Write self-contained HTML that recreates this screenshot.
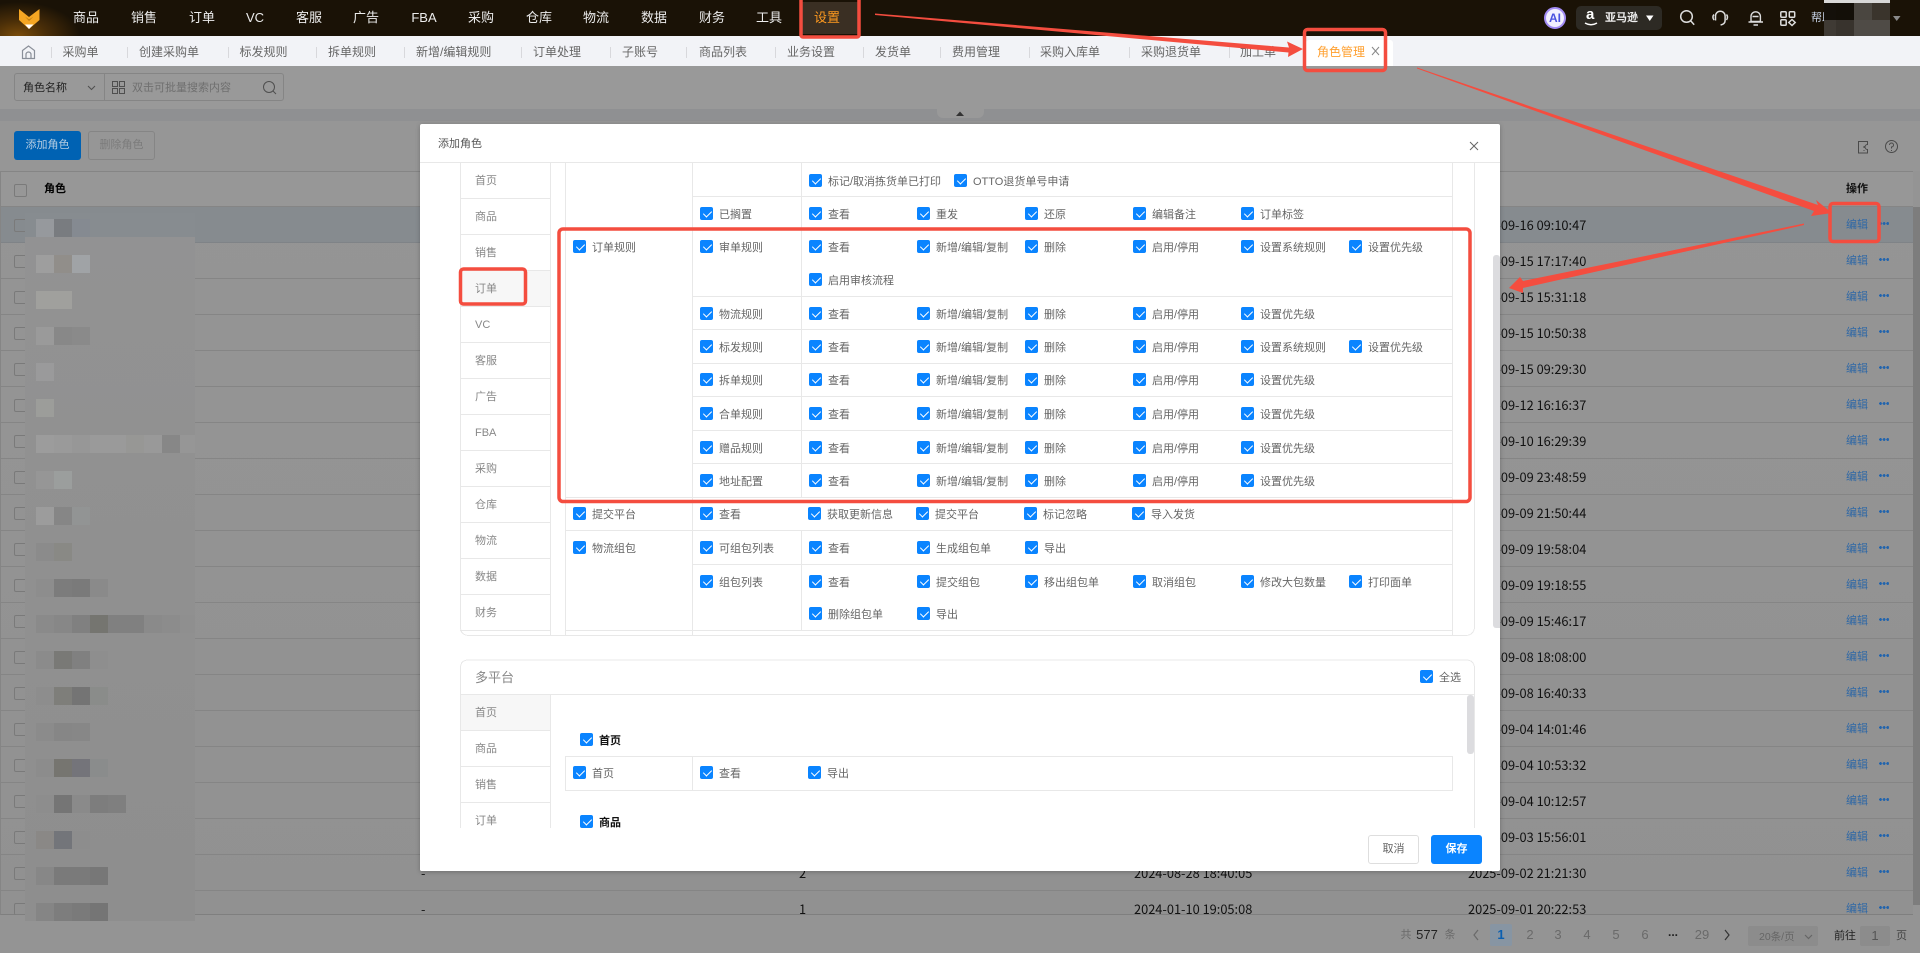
<!DOCTYPE html>
<html lang="zh"><head><meta charset="utf-8"><title>角色管理</title>
<style>
*{box-sizing:border-box;margin:0;padding:0}
html,body{width:1920px;height:953px;overflow:hidden;background:#949494}
body{position:relative;font:11px/16px "Liberation Sans","Noto Sans CJK SC",sans-serif;color:#666}
div,span,svg{position:absolute}
svg{left:0;top:0}
.n{top:10px;color:#ececec;font-size:13px;transform:translateX(-50%);white-space:nowrap}
.t{top:44px;white-space:nowrap;color:#666;font-size:12px}
.s{top:47px;width:1px;height:11px;background:#d8d8dc}
.d{left:1468px;color:#111;font-size:12.8px;white-space:nowrap;font-family:"Noto Sans CJK SC",sans-serif}
.e{left:1846px;color:#2f68a6;white-space:nowrap}
.o{left:1879px;width:10px;height:3px;background:radial-gradient(circle at 1.5px 1.5px,#2264ad 1.4px,transparent 1.5px) 0 0/3.6px 3px repeat-x}
.cb{left:14px;width:13px;height:13px;border:1px solid #7a7a7a;border-radius:2px}
.m{height:18px}
.r{left:0;width:1080px;height:16px}
.k{top:0;height:16px;padding-left:19px;white-space:nowrap;color:#666}
.k:before{content:"";position:absolute;left:0;top:0;width:13px;height:13px;background:#0a84ff;border-radius:2px}
.k:after{content:"";position:absolute;left:4.5px;top:2px;width:4px;height:7px;border:solid #fff;border-width:0 1.2px 1.2px 0;transform:rotate(45deg)}
.a{left:153px}.b{left:280px}.c{left:389px}.dd{left:497px}.ee{left:605px}.f{left:713px}.g{left:821px}.h{left:929px}
.l{color:#888;left:55px}
.p{top:927px;color:#6a6a6a;white-space:nowrap;transform:translateX(-50%)}
</style></head>
<body>
<!-- top bar -->
<div style="left:0;top:0;width:1920px;height:36px;background:#1a1206"></div>
<div style="left:0;top:0;width:90px;height:36px;background:radial-gradient(ellipse 62px 34px at 18px 36px,#7a4c0a 0,#4a2e08 45%,#1a1206 100%)"></div>
<svg width="60" height="36"><path d="M19 9L29 17L39.500 9V20L29 29L19 20z" fill="#f5a623"/><path d="M25 24.500H33.500L29 29z" fill="#fff"/><path d="M25 16.500L29 19.500L33.500 16.500L29 21z" fill="#b87a12"/></svg>
<div class="n" style="left:86px">商品</div><div class="n" style="left:144px">销售</div><div class="n" style="left:202px">订单</div><div class="n" style="left:255px">VC</div><div class="n" style="left:309px">客服</div><div class="n" style="left:366px">广告</div><div class="n" style="left:424px">FBA</div><div class="n" style="left:481px">采购</div><div class="n" style="left:539px">仓库</div><div class="n" style="left:596px">物流</div><div class="n" style="left:654px">数据</div><div class="n" style="left:712px">财务</div><div class="n" style="left:769px">工具</div>
<div style="left:802px;top:2px;width:56px;height:32px;background:#3a2f23"></div>
<div class="n" style="left:827px;color:#ff9a1f">设置</div>
<div style="left:1544px;top:7px;width:22px;height:22px;border-radius:50%;background:#f2f0ff;border:2px solid #a28cf5"></div>
<div style="left:1549px;top:10px;color:#4a52e0;font-weight:bold;font-size:12px">AI</div>
<div style="left:1576px;top:6px;width:86px;height:24px;border-radius:5px;background:#2d2a24"></div>
<div style="left:1586px;top:7px;color:#fff;font-weight:bold;font-size:15px;font-family:'Liberation Sans',sans-serif">a</div>
<div style="left:1605px;top:10px;color:#eee;font-size:11px;font-weight:bold">亚马逊</div>
<svg width="1920" height="36" style="fill:none;stroke:#ddd;stroke-width:1.5">
<path d="M1585 23q6 3.500 12 0" stroke="#fff"/>
<path d="M1646 15.500h7.500l-3.750 5.500z" fill="#fff" stroke="none"/>
<circle cx="1686.500" cy="16.500" r="5.800"/><path d="M1690.700 20.800l3.500 4"/>
<path d="M1715.500 20.500v-4.500a4.800 4.800 0 0 1 9.600 0v4.500q0 3.500-4.500 4.500M1714 14.500q-2.200 2.500 0 5.500M1726.500 14.500q2 2.500 0 5.500"/>
<path d="M1751 21.500v-5a4.700 4.700 0 0 1 9.400 0v5zM1748.500 22h14.500M1752.500 16.500h6M1753.500 25h4.500" stroke-width="1.400"/>
<rect x="1780.800" y="11.800" width="5.400" height="5.400" rx="1"/><rect x="1789.300" y="11.800" width="5.400" height="5.400" rx="1"/><rect x="1780.800" y="19.800" width="5.400" height="5.400" rx="1"/><path d="M1792 19.500l3.200 3-3.200 3-3.200-3z"/>
<path d="M1893 16h7.500l-3.750 5z" fill="#8a8a8a" stroke="none"/>
</svg>
<div style="left:1811px;top:10px;color:#c8d4e8;font-size:11px;width:13px;overflow:hidden;white-space:nowrap">帮助</div>
<div style="left:1824px;top:0;width:12px;height:36px;background:linear-gradient(#d8d8d8 0 3px,#14100a 3px 20px,#3f3a34 20px)"></div>
<div style="left:1836px;top:0;width:18px;height:36px;background:linear-gradient(#d8d8d8 0 3px,#130f08 3px 20px,#38332d 20px)"></div>
<div style="left:1854px;top:0;width:18px;height:36px;background:linear-gradient(#d8d8d8 0 3px,#4a4640 3px 20px,#4f4b46 20px)"></div>
<div style="left:1872px;top:0;width:18px;height:36px;background:linear-gradient(#d8d8d8 0 3px,#3a342c 3px 20px,#4f4b46 20px)"></div>

<!-- tab bar -->
<div style="left:0;top:36px;width:1920px;height:30px;background:#f2f3f7"></div>
<svg width="60" height="66" style="fill:none;stroke:#8a8f99;stroke-width:1.200"><path d="M22.500 50.500L28.500 46L34.500 50.500V58.500H22.500zM26 58.500V54.500a2.500 2.500 0 0 1 5 0V58.500"/></svg>
<div class="s" style="left:51px"></div><div class="t" style="left:62.500px">采购单</div>
<div class="s" style="left:127px"></div><div class="t" style="left:139px">创建采购单</div>
<div class="s" style="left:228px"></div><div class="t" style="left:239.500px">标发规则</div>
<div class="s" style="left:316px"></div><div class="t" style="left:328px">拆单规则</div>
<div class="s" style="left:404px"></div><div class="t" style="left:416px">新增/编辑规则</div>
<div class="s" style="left:521px"></div><div class="t" style="left:533px">订单处理</div>
<div class="s" style="left:610px"></div><div class="t" style="left:622px">子账号</div>
<div class="s" style="left:686px"></div><div class="t" style="left:699px">商品列表</div>
<div class="s" style="left:775px"></div><div class="t" style="left:787px">业务设置</div>
<div class="s" style="left:863px"></div><div class="t" style="left:875px">发货单</div>
<div class="s" style="left:940px"></div><div class="t" style="left:952px">费用管理</div>
<div class="s" style="left:1029px"></div><div class="t" style="left:1040px">采购入库单</div>
<div class="s" style="left:1129px"></div><div class="t" style="left:1141px">采购退货单</div>
<div class="s" style="left:1229px"></div><div class="t" style="left:1240px">加工单</div>
<div style="left:1306px;top:40px;width:87px;height:26px;background:#fff;border-radius:3px 3px 0 0"></div>
<div class="t" style="left:1317px;color:#ff9f2e">角色管理</div>
<svg width="1400" height="66" style="fill:none;stroke:#888;stroke-width:1"><path d="M1372 47l7 8M1379 47l-7 8"/></svg>

<!-- page under overlay -->
<div style="left:0;top:66px;width:1920px;height:43px;background:#999"></div>
<div style="left:0;top:109px;width:1920px;height:12px;background:#8f9092"></div>
<div style="left:937px;top:109px;width:47px;height:9px;background:#999;border-radius:0 0 6px 6px"></div>
<svg width="1000" height="120"><path d="M956 116l4-4.500 4 4.500z" fill="#333"/></svg>
<div style="left:0;top:121px;width:1920px;height:50px;background:#969696"></div>
<div style="left:14px;top:73px;width:270px;height:28px;border:1px solid #858585;border-radius:3px"></div>
<div style="left:104px;top:73px;width:1px;height:28px;background:#858585"></div>
<div style="left:23px;top:80px;color:#222;white-space:nowrap">角色名称</div>
<div style="left:132px;top:80px;color:#6f6f6f;white-space:nowrap">双击可批量搜索内容</div>
<svg width="300" height="110" style="fill:none;stroke:#4f4f4f;stroke-width:1"><path d="M88 86l3.500 3.500 3.500-3.500" /><rect x="112.500" y="81.500" width="5" height="5"/><rect x="119.500" y="81.500" width="5" height="5"/><rect x="112.500" y="88.500" width="5" height="5"/><rect x="119.500" y="88.500" width="5" height="5"/><circle cx="269" cy="87" r="5.500"/><path d="M273 91l3 3"/></svg>
<div style="left:14px;top:131px;width:67px;height:29px;background:#0062b3;border-radius:3px;color:#b5cde2;text-align:center;line-height:28px">添加角色</div>
<div style="left:88px;top:131px;width:67px;height:29px;border:1px solid #858585;border-radius:3px;color:#7b7b7b;text-align:center;line-height:27px">删除角色</div>
<svg width="1920" height="170" style="fill:none;stroke:#4a4a4a;stroke-width:1"><path d="M1858.500 141.500h9v3a2 2 0 0 0 0 5v3.500h-9z M1864 146v2M1864 150v1"/><circle cx="1891.500" cy="146.500" r="6"/><path d="M1889.500 145a2 2 0 1 1 2 2v1.500M1891.500 150v1"/></svg>

<!-- table -->
<div style="left:0;top:171px;width:1913px;height:744px;border-left:1px solid #858585;border-top:1px solid #858585;border-bottom:1px solid #7f7f7f;background:linear-gradient(#959595,#919191)"></div>
<div style="left:1px;top:172px;width:1912px;height:35px;background:#979797;border-bottom:1px solid #858585"></div>
<div style="left:1px;top:207px;width:1912px;height:707px;background:repeating-linear-gradient(to bottom,transparent 0 35px,#858585 35px 36px)"></div>
<div style="left:1px;top:207px;width:1912px;height:36px;background:#868b8f;border-bottom:1px solid #7f8387"></div>
<div style="left:1913px;top:207px;width:7px;height:698px;background:#7d7d7d"></div>
<div style="left:44px;top:181px;color:#000;font-weight:bold">角色</div>
<div style="left:1846px;top:181px;color:#111;font-weight:bold">操作</div>
<div class="cb" style="top:184px"></div><div class="cb" style="top:219px"></div><div class="cb" style="top:255px"></div><div class="cb" style="top:291px"></div><div class="cb" style="top:327px"></div><div class="cb" style="top:363px"></div><div class="cb" style="top:399px"></div><div class="cb" style="top:435px"></div><div class="cb" style="top:471px"></div><div class="cb" style="top:507px"></div><div class="cb" style="top:543px"></div><div class="cb" style="top:579px"></div><div class="cb" style="top:615px"></div><div class="cb" style="top:651px"></div><div class="cb" style="top:687px"></div><div class="cb" style="top:723px"></div><div class="cb" style="top:759px"></div><div class="cb" style="top:795px"></div><div class="cb" style="top:831px"></div><div class="cb" style="top:867px"></div><div class="cb" style="top:903px;height:12px;border-bottom:0"></div>
<div style="left:25px;top:237px;width:170px;height:684px;background:linear-gradient(#929293 0,#919191 30%,#8e8e8e 100%)"></div>
<div style="left:25px;top:213px;width:170px;height:24px;background:#878c90"></div>
<!-- mosaic -->
<div class="m" style="left:36px;top:219px;width:54px;background:linear-gradient(90deg,#96999d 0 18px,#797c80 18px 36px,#858a91 36px)"></div>
<div class="m" style="left:36px;top:255px;width:54px;background:linear-gradient(90deg,#9e9e9e 0 18px,#918e8a 18px 36px,#a0a3a6 36px)"></div>
<div class="m" style="left:36px;top:291px;width:36px;background:#a0a09d"></div>
<div class="m" style="left:36px;top:327px;width:54px;background:linear-gradient(90deg,#9a9a9a 0 18px,#888 18px 36px,#8a8a8a 36px)"></div>
<div class="m" style="left:36px;top:363px;width:18px;background:#9a9a9b"></div>
<div class="m" style="left:36px;top:399px;width:18px;background:#9c9d9a"></div>
<div class="m" style="left:36px;top:435px;width:159px;background:linear-gradient(90deg,#9c9c9c 0 18px,#9a9a9a 18px 36px,#979797 36px 54px,#9a9a9a 54px 90px,#979795 90px 108px,#999 108px 126px,#878787 126px 144px,#969696 144px)"></div>
<div class="m" style="left:36px;top:471px;width:36px;background:linear-gradient(90deg,#969696 0 18px,#9b9e9d 18px)"></div>
<div class="m" style="left:36px;top:507px;width:54px;background:linear-gradient(90deg,#9c9c9c 0 18px,#868686 18px 36px,#929494 36px)"></div>
<div class="m" style="left:36px;top:543px;width:36px;background:linear-gradient(90deg,#8b8b8b 0 18px,#898985 18px)"></div>
<div class="m" style="left:36px;top:579px;width:72px;background:linear-gradient(90deg,#8d8d8d 0 18px,#7c7c7c 18px 36px,#7a7a7a 36px 54px,#8a8a8a 54px)"></div>
<div class="m" style="left:36px;top:615px;width:159px;background:linear-gradient(90deg,#8a8a8a 0 18px,#878787 18px 36px,#808080 36px 54px,#757570 54px 72px,#808080 72px 108px,#8a8a8a 108px 126px,#8c8c8c 126px 144px,#8f8f8f 144px)"></div>
<div class="m" style="left:36px;top:651px;width:72px;background:linear-gradient(90deg,#8b8b8b 0 18px,#797976 18px 36px,#808080 36px 54px,#8e8e8e 54px)"></div>
<div class="m" style="left:36px;top:687px;width:72px;background:linear-gradient(90deg,#8d8d8d 0 18px,#7e7e7a 18px 36px,#747474 36px 54px,#8a8c8a 54px)"></div>
<div class="m" style="left:36px;top:723px;width:54px;background:linear-gradient(90deg,#8b8b8b 0 18px,#868686 18px 36px,#878787 36px)"></div>
<div class="m" style="left:36px;top:759px;width:72px;background:linear-gradient(90deg,#8c8c8c 0 18px,#767570 18px 36px,#74747a 36px 54px,#8a8c8c 54px)"></div>
<div class="m" style="left:36px;top:795px;width:90px;background:linear-gradient(90deg,#8d8d8d 0 18px,#757575 18px 36px,#8a8a8a 36px 54px,#7d7d7d 54px 72px,#7f7f7f 72px)"></div>
<div class="m" style="left:36px;top:831px;width:54px;background:linear-gradient(90deg,#8a8886 0 18px,#73757a 18px 36px,#8d8d8d 36px)"></div>
<div class="m" style="left:36px;top:867px;width:72px;background:linear-gradient(90deg,#878787 0 18px,#7a7a7a 18px 54px,#777 54px)"></div>
<div class="m" style="left:36px;top:903px;width:72px;background:linear-gradient(90deg,#858585 0 18px,#7d7d7d 18px 36px,#7a7a7a 36px 54px,#757575 54px)"></div>

<div class="d" style="top:217px">2025-09-16 09:10:47</div><div class="d" style="top:253px">2025-09-15 17:17:40</div><div class="d" style="top:289px">2025-09-15 15:31:18</div><div class="d" style="top:325px">2025-09-15 10:50:38</div><div class="d" style="top:361px">2025-09-15 09:29:30</div><div class="d" style="top:397px">2025-09-12 16:16:37</div><div class="d" style="top:433px">2025-09-10 16:29:39</div><div class="d" style="top:469px">2025-09-09 23:48:59</div><div class="d" style="top:505px">2025-09-09 21:50:44</div><div class="d" style="top:541px">2025-09-09 19:58:04</div><div class="d" style="top:577px">2025-09-09 19:18:55</div><div class="d" style="top:613px">2025-09-09 15:46:17</div><div class="d" style="top:649px">2025-09-08 18:08:00</div><div class="d" style="top:685px">2025-09-08 16:40:33</div><div class="d" style="top:721px">2025-09-04 14:01:46</div><div class="d" style="top:757px">2025-09-04 10:53:32</div><div class="d" style="top:793px">2025-09-04 10:12:57</div><div class="d" style="top:829px">2025-09-03 15:56:01</div><div class="d" style="top:865px">2025-09-02 21:21:30</div><div class="d" style="top:901px">2025-09-01 20:22:53</div>
<div class="d" style="left:1134px;top:865px">2024-08-28 18:40:05</div><div class="d" style="left:1134px;top:901px">2024-01-10 19:05:08</div>
<div class="d" style="left:421px;top:865px">-</div><div class="d" style="left:421px;top:901px">-</div>
<div class="d" style="left:799px;top:865px">2</div><div class="d" style="left:799px;top:901px">1</div>

<div class="e" style="top:217px">编辑</div><div class="e" style="top:253px">编辑</div><div class="e" style="top:289px">编辑</div><div class="e" style="top:325px">编辑</div><div class="e" style="top:361px">编辑</div><div class="e" style="top:397px">编辑</div><div class="e" style="top:433px">编辑</div><div class="e" style="top:469px">编辑</div><div class="e" style="top:505px">编辑</div><div class="e" style="top:541px">编辑</div><div class="e" style="top:577px">编辑</div><div class="e" style="top:613px">编辑</div><div class="e" style="top:649px">编辑</div><div class="e" style="top:685px">编辑</div><div class="e" style="top:721px">编辑</div><div class="e" style="top:757px">编辑</div><div class="e" style="top:793px">编辑</div><div class="e" style="top:829px">编辑</div><div class="e" style="top:865px">编辑</div><div class="e" style="top:901px">编辑</div>
<div class="o" style="top:222px"></div><div class="o" style="top:258px"></div><div class="o" style="top:294px"></div><div class="o" style="top:330px"></div><div class="o" style="top:366px"></div><div class="o" style="top:402px"></div><div class="o" style="top:438px"></div><div class="o" style="top:474px"></div><div class="o" style="top:510px"></div><div class="o" style="top:546px"></div><div class="o" style="top:582px"></div><div class="o" style="top:618px"></div><div class="o" style="top:654px"></div><div class="o" style="top:690px"></div><div class="o" style="top:726px"></div><div class="o" style="top:762px"></div><div class="o" style="top:798px"></div><div class="o" style="top:834px"></div><div class="o" style="top:870px"></div><div class="o" style="top:906px"></div>

<!-- pagination -->
<div class="p" style="left:1406px">共</div>
<div class="p" style="left:1427px;color:#222;font-size:13px">577</div>
<div class="p" style="left:1450px">条</div>
<div style="left:1490px;top:924px;width:22px;height:22px;background:#8795a3;border-radius:2px;color:#0a5fb0;font-weight:bold;text-align:center;line-height:22px;font-size:13px">1</div>
<div class="p" style="left:1530px;font-size:13px">2</div><div class="p" style="left:1558px;font-size:13px">3</div><div class="p" style="left:1587px;font-size:13px">4</div><div class="p" style="left:1616px;font-size:13px">5</div><div class="p" style="left:1645px;font-size:13px">6</div><div class="p" style="left:1673px;font-weight:bold;color:#222;top:924px;font-size:12px">...</div><div class="p" style="left:1702px;font-size:13px">29</div>
<svg width="1920" height="953" style="fill:none;stroke:#6a6a6a;stroke-width:1.2"><path d="M1478 930l-4 5 4 5"/><path d="M1725 930l4 5-4 5" stroke="#333"/></svg>
<div style="left:1748px;top:926px;width:70px;height:20px;background:#8c8c8c;border-radius:2px"></div>
<div style="left:1759px;top:929px;color:#666;font-size:10.500px;white-space:nowrap">20条/页</div>
<svg width="1920" height="953" style="fill:none;stroke:#666;stroke-width:1.200"><path d="M1805 935l3.500 3.500 3.500-3.500"/></svg>
<div style="left:1834px;top:928px;color:#222;white-space:nowrap">前往</div>
<div style="left:1860px;top:926px;width:30px;height:20px;background:#8c8c8c;border-radius:2px;color:#555;text-align:center;line-height:20px;font-size:13px">1</div>
<div style="left:1896px;top:928px;color:#444">页</div>

<!-- modal -->
<div style="left:420px;top:124px;width:1080px;height:747px;background:#fff;border-radius:2px;box-shadow:0 1px 5px rgba(0,0,0,.25);overflow:hidden">
  <svg width="1080" height="747" style="left:0;top:0;fill:none;stroke:#e8e8e8;stroke-width:1;shape-rendering:crispEdges">
    <path transform="translate(-420 -124)" d="
    M420 162.500H1500
    M460.500 162V627q0 8 8 8.500H1466q8-.5 8.500-8.500V162
    M550.500 162V635 M565.500 162V635 M692.500 162V635 M801.500 162V497 M801.500 530V630 M1452.500 162V635
    M460 198.500H550 M460 234.500H550 M460 270.500H550 M460 306.500H550 M460 342.500H550 M460 378.500H550 M460 414.500H550 M460 450.500H550 M460 486.500H550 M460 522.500H550 M460 558.500H550 M460 594.500H550 M460 630.500H550
    M692 196.500H1452 M692 229.500H1452 M692 296.500H1452 M692 329.500H1452 M692 363.500H1452 M692 396.500H1452 M692 430.500H1452 M692 463.500H1452
    M565 497.500H1452 M565 530.500H1452 M692 564.500H1452 M565 630.500H1452
    M460.500 828V668q0-8 8-8H1466q8 0 8.500 8V828
    M460 694.500H1474 M550.500 694V828 M460 730.500H550 M460 766.500H550 M460 802.500H550
    M565.500 756.500H1452.500V790.500H565.500Z M692.500 756V790"/>
  </svg>
  <div style="left:41px;top:147px;width:89px;height:35px;background:#f7f7f7"></div>
  <div style="left:41px;top:571px;width:89px;height:35px;background:#f7f7f7"></div>
  <div style="left:18px;top:12px;color:#555">添加角色</div>
  <svg width="1080" height="60" style="fill:none;stroke:#666;stroke-width:1"><path d="M1050 18l8 8M1058 18l-8 8"/></svg>

  <div class="l" style="top:49px">首页</div><div class="l" style="top:85px">商品</div><div class="l" style="top:121px">销售</div><div class="l" style="top:157px">订单</div><div class="l" style="top:193px">VC</div><div class="l" style="top:229px">客服</div><div class="l" style="top:265px">广告</div><div class="l" style="top:301px">FBA</div><div class="l" style="top:337px">采购</div><div class="l" style="top:373px">仓库</div><div class="l" style="top:409px">物流</div><div class="l" style="top:445px">数据</div><div class="l" style="top:481px">财务</div>

  <div class="r" style="top:50px"><span class="k c">标记/取消拣货单已打印</span><span class="k" style="left:534px">OTTO退货单号申请</span></div>
  <div class="r" style="top:83px"><span class="k b">已搁置</span><span class="k c">查看</span><span class="k dd">重发</span><span class="k ee">还原</span><span class="k f">编辑备注</span><span class="k g">订单标签</span></div>
  <div class="r" style="top:116px"><span class="k a">订单规则</span><span class="k b">审单规则</span><span class="k c">查看</span><span class="k dd">新增/编辑/复制</span><span class="k ee">删除</span><span class="k f">启用/停用</span><span class="k g">设置系统规则</span><span class="k h">设置优先级</span></div>
  <div class="r" style="top:149px"><span class="k c">启用审核流程</span></div>
  <div class="r" style="top:183px"><span class="k b">物流规则</span><span class="k c">查看</span><span class="k dd">新增/编辑/复制</span><span class="k ee">删除</span><span class="k f">启用/停用</span><span class="k g">设置优先级</span></div>
  <div class="r" style="top:216px"><span class="k b">标发规则</span><span class="k c">查看</span><span class="k dd">新增/编辑/复制</span><span class="k ee">删除</span><span class="k f">启用/停用</span><span class="k g">设置系统规则</span><span class="k h">设置优先级</span></div>
  <div class="r" style="top:249px"><span class="k b">拆单规则</span><span class="k c">查看</span><span class="k dd">新增/编辑/复制</span><span class="k ee">删除</span><span class="k f">启用/停用</span><span class="k g">设置优先级</span></div>
  <div class="r" style="top:283px"><span class="k b">合单规则</span><span class="k c">查看</span><span class="k dd">新增/编辑/复制</span><span class="k ee">删除</span><span class="k f">启用/停用</span><span class="k g">设置优先级</span></div>
  <div class="r" style="top:317px"><span class="k b">赠品规则</span><span class="k c">查看</span><span class="k dd">新增/编辑/复制</span><span class="k ee">删除</span><span class="k f">启用/停用</span><span class="k g">设置优先级</span></div>
  <div class="r" style="top:350px"><span class="k b">地址配置</span><span class="k c">查看</span><span class="k dd">新增/编辑/复制</span><span class="k ee">删除</span><span class="k f">启用/停用</span><span class="k g">设置优先级</span></div>
  <div class="r" style="top:383px"><span class="k a">提交平台</span><span class="k b">查看</span><span class="k" style="left:388px">获取更新信息</span><span class="k" style="left:496px">提交平台</span><span class="k" style="left:604px">标记忽略</span><span class="k" style="left:712px">导入发货</span></div>
  <div class="r" style="top:417px"><span class="k a">物流组包</span><span class="k b">可组包列表</span><span class="k c">查看</span><span class="k dd">生成组包单</span><span class="k ee">导出</span></div>
  <div class="r" style="top:451px"><span class="k b">组包列表</span><span class="k c">查看</span><span class="k dd">提交组包</span><span class="k ee">移出组包单</span><span class="k f">取消组包</span><span class="k g">修改大包数量</span><span class="k h">打印面单</span></div>
  <div class="r" style="top:483px"><span class="k c">删除组包单</span><span class="k dd">导出</span></div>

  <div style="left:55px;top:546px;color:#888;font-size:13px;white-space:nowrap">多平台</div>
  <div class="r" style="top:546px"><span class="k" style="left:1000px">全选</span></div>
  <div class="l" style="top:581px">首页</div><div class="l" style="top:617px">商品</div><div class="l" style="top:653px">销售</div><div class="l" style="top:689px">订单</div>
  <div class="r" style="top:609px"><span class="k" style="left:160px;color:#111;font-weight:bold">首页</span></div>
  <div class="r" style="top:642px"><span class="k a">首页</span><span class="k b">查看</span><span class="k" style="left:388px">导出</span></div>
  <div class="r" style="top:691px"><span class="k" style="left:160px;color:#111;font-weight:bold">商品</span></div>
  <div style="left:0;top:704px;width:1080px;height:43px;background:#fff"></div>
  <div style="left:1047px;top:571px;width:6.500px;height:59px;background:#dcdcdf;border-radius:3px"></div>
  <div style="left:1073px;top:131px;width:7px;height:373px;background:#dcdcdf;border-radius:3px 3px 0 3px"></div>
  <div style="left:948px;top:711px;width:51px;height:29px;border:1px solid #dedede;border-radius:3px;text-align:center;line-height:26px;color:#666">取消</div>
  <div style="left:1011px;top:711px;width:51px;height:29px;background:#0a84ff;border-radius:3px;text-align:center;line-height:28px;color:#fff;font-weight:bold">保存</div>
</div>

<!-- annotations -->
<svg width="1920" height="953" style="z-index:5;fill:none;stroke:#f44d3f;stroke-width:3.500">
  <rect x="801" y="-3" width="58" height="40" rx="2"/>
  <rect x="1304.500" y="29.500" width="81" height="41" rx="3"/>
  <rect x="1830" y="203.500" width="49" height="38" rx="3"/>
  <rect x="460.500" y="269" width="65" height="35" rx="3"/>
  <rect x="559" y="229" width="911" height="272.500" rx="4"/>
  <g fill="#f44d3f" stroke="none">
    <path d="M875 13.500L1289 47.500L1287 41.500L1303 49L1288 57L1288.500 52.500L875 15z"/>
    <path d="M1417 67.500L1818 205L1816 200L1832 213L1811 216L1814 211L1417 68.500z"/>
    <path d="M1804 223.500L1523 281L1520 277L1509 288L1523 293L1523 288L1804 225z"/>
  </g>
</svg>
</body></html>
